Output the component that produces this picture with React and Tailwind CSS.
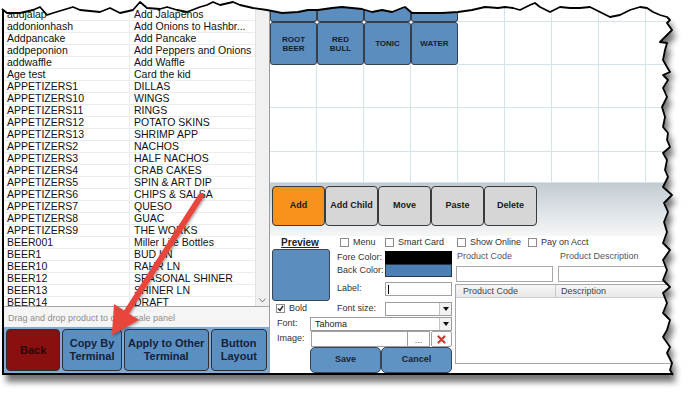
import React from 'react';

const rows = [
  ['addjalap', 'Add Jalapenos'],
  ['addonionhash', 'Add Onions to Hashbr...'],
  ['Addpancake', 'Add Pancake'],
  ['addpeponion', 'Add Peppers and Onions'],
  ['addwaffle', 'Add Waffle'],
  ['Age test', 'Card the kid'],
  ['APPETIZERS1', 'DILLAS'],
  ['APPETIZERS10', 'WINGS'],
  ['APPETIZERS11', 'RINGS'],
  ['APPETIZERS12', 'POTATO SKINS'],
  ['APPETIZERS13', 'SHRIMP APP'],
  ['APPETIZERS2', 'NACHOS'],
  ['APPETIZERS3', 'HALF NACHOS'],
  ['APPETIZERS4', 'CRAB CAKES'],
  ['APPETIZERS5', 'SPIN & ART DIP'],
  ['APPETIZERS6', 'CHIPS & SALSA'],
  ['APPETIZERS7', 'QUESO'],
  ['APPETIZERS8', 'GUAC'],
  ['APPETIZERS9', 'THE WORKS'],
  ['BEER001', 'Miller Lite Bottles'],
  ['BEER1', 'BUD LN'],
  ['BEER10', 'RAHR LN'],
  ['BEER12', 'SEASONAL SHINER'],
  ['BEER13', 'SHINER LN'],
  ['BEER14', 'DRAFT'],
];

const drinks = ['ROOT\nBEER', 'RED\nBULL', 'TONIC', 'WATER'];

// torn paper edge (top, then right side going down)
const tear = [
  [2, 9], [7, 13], [20, 13], [33, 10], [40, 7], [47, 15], [53, 13], [73, 7], [80, 10], [100, 12],
  [110, 8], [120, 13], [133, 10], [140, 2], [147, 8], [160, 9], [167, 7], [177, 10], [187, 12],
  [200, 7], [207, 5], [213, 2], [220, 5], [233, 2], [240, 5], [253, 8], [267, 10], [282, 13],
  [298, 12], [308, 10], [318, 10], [332, 8], [342, 7], [352, 8], [362, 9], [372, 12], [382, 10],
  [392, 12], [402, 8], [405, 7], [412, 13], [425, 13], [442, 13], [458, 12], [472, 10], [485, 7],
  [498, 8], [505, 7], [513, 8], [520, 10], [530, 5], [535, 3], [540, 7], [550, 12], [560, 7],
  [570, 8], [580, 8], [590, 7], [600, 12], [610, 17], [620, 15], [630, 10], [640, 7], [647, 8],
  [653, 12], [660, 15], [667, 17], [670, 20], [667, 23], [672, 30], [665, 37], [660, 42],
  [667, 43], [665, 50], [663, 60], [667, 67], [670, 72], [663, 75], [668, 80], [663, 88],
  [667, 97], [662, 107], [665, 117], [663, 127], [668, 133], [667, 140], [670, 147], [663, 153],
  [667, 160], [665, 170], [668, 177], [663, 187], [672, 195], [664, 203], [668, 212], [664, 222],
  [667, 232], [663, 243], [670, 250], [663, 260], [667, 270], [663, 280], [670, 287], [663, 293],
  [667, 303], [663, 313], [670, 320], [667, 330], [663, 337], [670, 347], [667, 353], [672, 363],
  [670, 370], [673, 375],
];

const tearLine = tear.map((p) => p.join(',')).join(' ');
const paperPath = 'M' + tear.map((p) => p.join(' ')).join(' L') + ' L2 375 Z';

function Checkbox({ checked }) {
  return (
    <span className="w-[9px] h-[9px] border border-[#8c8c8c] bg-white flex items-center justify-center shrink-0">
      {checked && (
        <svg width="7" height="7" viewBox="0 0 7 7">
          <path d="M1 3.5 L3 5.5 L6 1" fill="none" stroke="#222" strokeWidth="1.4" />
        </svg>
      )}
    </span>
  );
}

function Select({ className = '', value }) {
  return (
    <div className={`flex h-[14px] border border-[#9c9c9c] bg-white ${className}`}>
      <div className="flex-1 pl-[4px] leading-[12px] text-[9px] text-[#222]">{value}</div>
      <div className="w-[12px] border-l border-[#c4c4c4] bg-[#f2f2f2] flex items-center justify-center">
        <svg width="6" height="4" viewBox="0 0 6 4">
          <path d="M0 0H6L3 4Z" fill="#111" />
        </svg>
      </div>
    </div>
  );
}

function ProductList() {
  return (
    <div className="w-[265px] flex flex-col bg-[#f5f5f5]">
      <div className="h-[307px] flex border-b border-[#a4a4a4] bg-white overflow-hidden">
        <div className="flex-1 overflow-hidden text-[10.5px] text-[#111] pt-[9px]">
          {rows.map(([code, desc]) => (
            <div key={code} className="flex h-[12px] border-b border-[#ececec] leading-[11px]">
              <div className="w-[126px] pl-[3px] border-r border-[#ececec] whitespace-nowrap">{code}</div>
              <div className="flex-1 pl-[4px] whitespace-nowrap overflow-hidden">{desc}</div>
            </div>
          ))}
        </div>
        <div className="w-[14px] bg-[#f0f0f0] border-l border-[#e2e2e2] flex flex-col justify-end items-center pb-[3px]">
          <svg width="7" height="5" viewBox="0 0 7 5">
            <path d="M0.5 0.5 L3.5 4 L6.5 0.5" fill="none" stroke="#777" strokeWidth="1" />
          </svg>
        </div>
      </div>
      <div className="h-[20px] pl-[4px] pt-[6px] text-[9px] leading-[10px] text-[#8e8e8e] whitespace-nowrap">
        Drag and drop product to quick sale panel
      </div>
      <div className="h-[46px] bg-[#82aad2] flex gap-[2px] p-[2px] text-[11px] font-bold leading-[13px]">
        <div className="w-[55px] rounded-[4px] border border-[#2a2e35] bg-[#8a1010] text-[#2a0606] flex items-center justify-center">Back</div>
        <div className="w-[60px] rounded-[4px] border border-[#2a2e35] bg-[#5b8fc2] text-[#14223a] flex items-center justify-center text-center">Copy By<br />Terminal</div>
        <div className="w-[86px] rounded-[4px] border border-[#2a2e35] bg-[#5b8fc2] text-[#14223a] flex items-center justify-center text-center">Apply to Other<br />Terminal</div>
        <div className="w-[57px] rounded-[4px] border border-[#2a2e35] bg-[#5b8fc2] text-[#14223a] flex items-center justify-center text-center">Button<br />Layout</div>
      </div>
    </div>
  );
}

function ButtonGrid() {
  return (
    <div className="h-[183px] grid grid-cols-[repeat(9,47px)] grid-rows-[22px_43px_43px_44px_31px] bg-white">
      {Array.from({ length: 45 }).map((_, i) => {
        const r = Math.floor(i / 9);
        const c = i % 9;
        if (r === 0 && c < 4)
          return <div key={i} className="rounded-b-[3px] border border-t-0 border-[#36404c] bg-[#5b8ebf]" />;
        if (r === 1 && c < 4)
          return (
            <div key={i} className="rounded-[3px] border border-[#36404c] bg-[#5b8ebf] flex items-center justify-center text-center font-bold text-[8px] leading-[9px] text-[#17202c] whitespace-pre-line">
              {drinks[c]}
            </div>
          );
        return <div key={i} className="border-r border-b border-[#d3e5ec]" />;
      })}
    </div>
  );
}

function Toolbar() {
  const btns = ['Add Child', 'Move', 'Paste', 'Delete'];
  return (
    <div className="h-[53px] bg-gradient-to-b from-[#c3ccd3] to-[#f5f7f8] flex pl-[2px] pt-[3px] text-[9px] font-bold text-[#1a1a1a]">
      <div className="w-[53px] h-[40px] rounded-[4px] border border-[#3a3a3a] bg-[#f7921e] flex items-center justify-center">Add</div>
      {btns.map((b) => (
        <div key={b} className="w-[53px] h-[40px] rounded-[4px] border border-[#3a3a3a] bg-[#d6d6d6] flex items-center justify-center">{b}</div>
      ))}
    </div>
  );
}

function EditForm() {
  return (
    <div className="flex-1 bg-white text-[9px] text-[#333] flex flex-col">
      <div className="h-[13px] flex items-center">
        <div className="w-[60px] text-center font-bold underline text-[10px] text-[#222]">Preview</div>
        <div className="ml-[10px] w-[45px] flex items-center gap-[4px]"><Checkbox /><span>Menu</span></div>
        <div className="w-[72px] flex items-center gap-[4px]"><Checkbox /><span>Smart Card</span></div>
        <div className="w-[71px] flex items-center gap-[4px]"><Checkbox /><span>Show Online</span></div>
        <div className="flex items-center gap-[4px] whitespace-nowrap"><Checkbox /><span>Pay on Acct</span></div>
      </div>
      <div className="flex flex-1">
        <div className="w-[185px] flex flex-col">
          <div className="h-[52px] flex">
            <div className="ml-[2px] w-[58px] h-[52px] rounded-[3px] border border-[#3c4650] bg-[#5b8ebf]" />
            <div className="ml-[7px] flex flex-col">
              <div className="mt-[2px] h-[13px] flex items-center">
                <span className="w-[48px]">Fore Color:</span>
                <span className="w-[67px] h-[13px] bg-black" />
              </div>
              <div className="h-[13px] flex items-center">
                <span className="w-[48px]">Back Color:</span>
                <span className="w-[67px] h-[13px] bg-[#4a80b6] border border-[#2c3640]" />
              </div>
              <div className="mt-[5px] h-[14px] flex items-center">
                <span className="w-[48px]">Label:</span>
                <span className="w-[67px] h-[14px] bg-white border border-[#a0a0a0] pl-[2px] flex items-center">
                  <span className="w-px h-[9px] bg-black" />
                </span>
              </div>
            </div>
          </div>
          <div className="h-[15px] flex items-center">
            <div className="w-[67px] pl-[6px] flex items-center gap-[4px]"><Checkbox checked /><span>Bold</span></div>
            <span className="w-[48px]">Font size:</span>
            <Select className="w-[67px]" />
          </div>
          <div className="h-[15px] flex items-center">
            <span className="ml-[7px] w-[33px]">Font:</span>
            <Select className="w-[142px]" value="Tahoma" />
          </div>
          <div className="h-[16px] flex items-center">
            <span className="ml-[7px] w-[34px]">Image:</span>
            <span className="w-[97px] h-[16px] bg-white border border-[#a0a0a0]" />
            <span className="w-[22px] h-[16px] bg-white border border-[#a0a0a0] border-l-0 flex items-end justify-center pb-[3px] text-[#555] leading-[6px]">...</span>
            <span className="ml-px w-[21px] h-[16px] bg-white border border-[#a0a0a0] rounded-[2px] flex items-center justify-center">
              <svg width="9" height="9" viewBox="0 0 9 9">
                <path d="M1.5 1.5 L7.5 7.5 M7.5 1.5 L1.5 7.5" stroke="#d8352c" strokeWidth="2.2" strokeLinecap="round" />
              </svg>
            </span>
          </div>
          <div className="h-[26px] flex pl-[40px] font-bold text-[9px] text-[#1a2434]">
            <div className="w-[71px] rounded-[5px] border border-[#3a4450] bg-[#5f93c4] flex items-center justify-center">Save</div>
            <div className="w-[71px] rounded-[5px] border border-[#3a4450] bg-[#5f93c4] flex items-center justify-center">Cancel</div>
          </div>
        </div>
        <div className="flex-1 flex flex-col text-[#555]">
          <div className="h-[16px] flex items-center whitespace-nowrap">
            <span className="pl-[2px] w-[105px]">Product Code</span>
            <span>Product Description</span>
          </div>
          <div className="mt-[1px] h-[16px] flex">
            <span className="ml-[1px] w-[97px] bg-white border border-[#a8a8a8]" />
            <span className="ml-[5px] flex-1 bg-white border border-[#a8a8a8]" />
          </div>
          <div className="mt-[2px] h-[80px] border border-[#a8a8a8] bg-white">
            <div className="h-[13px] flex bg-gradient-to-b from-[#f7f7f7] to-[#e8e8e8] border-b border-[#d0d0d0] leading-[12px] text-[#444]">
              <span className="w-[100px] pl-[7px] border-r border-[#c8c8c8]">Product Code</span>
              <span className="pl-[5px]">Description</span>
            </div>
          </div>
        </div>
      </div>
    </div>
  );
}

export default function App() {
  return (
    <div className="relative w-[698px] h-[397px] overflow-hidden bg-white font-['Liberation_Sans',Arial,sans-serif]">
      <div className="ml-[2px] w-[692px] h-[375px] flex border-l-2 border-b-2 border-black overflow-hidden">
        <ProductList />
        <div className="flex-1 flex flex-col border-l border-[#9c9c9c]">
          <ButtonGrid />
          <Toolbar />
          <EditForm />
        </div>
      </div>

      {/* torn edge, shadow and callout arrow */}
      <svg className="absolute inset-0 pointer-events-none" width="698" height="397" viewBox="0 0 698 397">
        <defs>
          <clipPath id="outside">
            <path d={`M0 0H698V397H0Z ${paperPath}`} clipRule="evenodd" />
          </clipPath>
          <filter id="blur" x="-10%" y="-10%" width="120%" height="120%">
            <feGaussianBlur stdDeviation="3" />
          </filter>
          <filter id="ashadow" x="-20%" y="-20%" width="140%" height="140%">
            <feDropShadow dx="1" dy="1.5" stdDeviation="1.2" floodColor="#000" floodOpacity="0.35" />
          </filter>
        </defs>
        <path d={`M0 0H698V397H0Z ${paperPath}`} fill="#fff" fillRule="evenodd" />
        <g clipPath="url(#outside)">
          <path d={paperPath} transform="translate(4 7)" fill="#000" opacity="0.55" filter="url(#blur)" />
        </g>
        <polyline points={tearLine} fill="none" stroke="#000" strokeWidth="1.8" strokeLinejoin="round" />
        <line x1="2" y1="374" x2="673" y2="374" stroke="#000" strokeWidth="2" />
        <g filter="url(#ashadow)">
          <line x1="201" y1="196" x2="126" y2="313" stroke="#e8453c" strokeWidth="6" strokeLinecap="round" />
          <polygon points="112,335 139,320 114,304" fill="#e8453c" />
        </g>
      </svg>
    </div>
  );
}
